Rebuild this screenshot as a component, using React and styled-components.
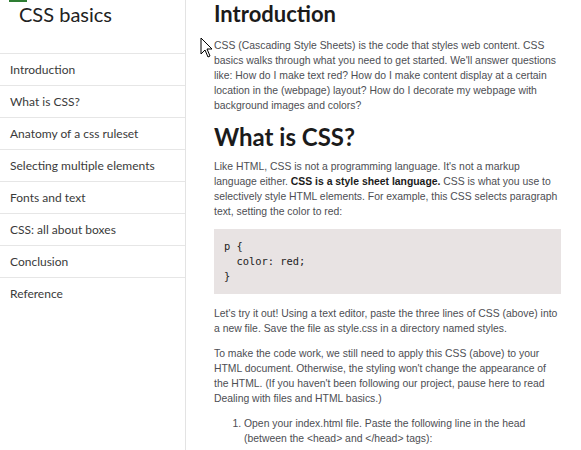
import React from 'react';
import styled, { createGlobalStyle } from 'styled-components';

const GlobalStyle = createGlobalStyle`
  html, body {
    margin: 0;
    padding: 0;
    background: #fff;
  }
  body {
    font-family: "Liberation Sans", Arial, sans-serif;
  }
`;

const Page = styled.div`
  display: flex;
  width: 581px;
  height: 450px;
  overflow: hidden;
  position: relative;
`;

const Sidebar = styled.aside`
  width: 185px;
  flex: none;
  border-right: 1px solid #e3e3e3;
  font-family: Lato, "Open Sans", sans-serif;
`;

const TitleBlock = styled.div`
  height: 53px;
  padding-left: 9px;
  box-sizing: border-box;
`;

const LogoEdge = styled.div`
  width: 18px;
  height: 2px;
  background: #2e7d32;
`;

const SiteTitle = styled.h1`
  margin: 0 0 0 10px;
  font-size: 20px;
  font-weight: 400;
  line-height: 24px;
  color: #222;
`;

const NavList = styled.ul`
  list-style: none;
  margin: 0;
  padding: 0;
`;

const NavItem = styled.li`
  height: 32px;
  box-sizing: border-box;
  border-top: 1px solid #e6e6e6;
  padding: 0 10px;
  display: flex;
  align-items: center;
  font-size: 12px;
  color: #3a3a3a;
`;

const Main = styled.main`
  flex: 1;
  padding: 0 20px 0 28px;
  color: #4d4e53;
  font-size: 10.4px;
  line-height: 15px;
`;

const Heading = styled.h2`
  font-family: Lato, "Open Sans", sans-serif;
  font-weight: 700;
  font-size: ${(p) => p.$size}px;
  line-height: 28px;
  color: #1b1b1b;
  margin: ${(p) => p.$mt}px 0 ${(p) => p.$mb}px;
`;

const Para = styled.p`
  margin: 0 0 10px;
  strong {
    color: #1b1b1b;
  }
`;

const CodeBlock = styled.pre`
  margin: 8px 0 12px;
  background: #e8e3e3;
  padding: 10px 10px;
  font-family: "DejaVu Sans Mono", "Liberation Mono", monospace;
  font-size: 10.4px;
  line-height: 15px;
  color: #222;
`;

const Steps = styled.ol`
  margin: 0;
  padding-left: 30px;
`;

const Cursor = styled.svg`
  position: absolute;
  left: 200px;
  top: 37px;
`;

const navItems = [
  'Introduction',
  'What is CSS?',
  'Anatomy of a css ruleset',
  'Selecting multiple elements',
  'Fonts and text',
  'CSS: all about boxes',
  'Conclusion',
  'Reference',
];

export default function App() {
  return (
    <>
      <GlobalStyle />
      <Page>
        <Sidebar>
          <TitleBlock>
            <LogoEdge />
            <SiteTitle>CSS basics</SiteTitle>
          </TitleBlock>
          <NavList>
            {navItems.map((item) => (
              <NavItem key={item}>{item}</NavItem>
            ))}
          </NavList>
        </Sidebar>
        <Main>
          <Heading $size={22} $mt={0} $mb={10}>Introduction</Heading>
          <Para>
            CSS (Cascading Style Sheets) is the code that styles web content. CSS basics walks
            through what you need to get started. We'll answer questions like: How do I make text
            red? How do I make content display at a certain location in the (webpage) layout? How
            do I decorate my webpage with background images and colors?
          </Para>
          <Heading $size={24} $mt={8} $mb={8}>What is CSS?</Heading>
          <Para>
            Like HTML, CSS is not a programming language. It's not a markup language either.{' '}
            <strong>CSS is a style sheet language.</strong> CSS is what you use to selectively
            style HTML elements. For example, this CSS selects paragraph text, setting the color
            to red:
          </Para>
          <CodeBlock>{`p {
  color: red;
}`}</CodeBlock>
          <Para>
            Let's try it out! Using a text editor, paste the three lines of CSS (above) into a new
            file. Save the file as style.css in a directory named styles.
          </Para>
          <Para>
            To make the code work, we still need to apply this CSS (above) to your HTML document.
            Otherwise, the styling won't change the appearance of the HTML. (If you haven't been
            following our project, pause here to read Dealing with files and HTML basics.)
          </Para>
          <Steps>
            <li>
              Open your index.html file. Paste the following line in the head (between the
              &lt;head&gt; and &lt;/head&gt; tags):
            </li>
          </Steps>
        </Main>
        <Cursor width="14" height="22" viewBox="0 0 14 22">
          <path d="M1 1 L1 17 L5 13 L8 20 L10 19 L7 12 L12 12 Z" fill="#fff" stroke="#000" strokeWidth="1" strokeLinejoin="round" />
        </Cursor>
      </Page>
    </>
  );
}
